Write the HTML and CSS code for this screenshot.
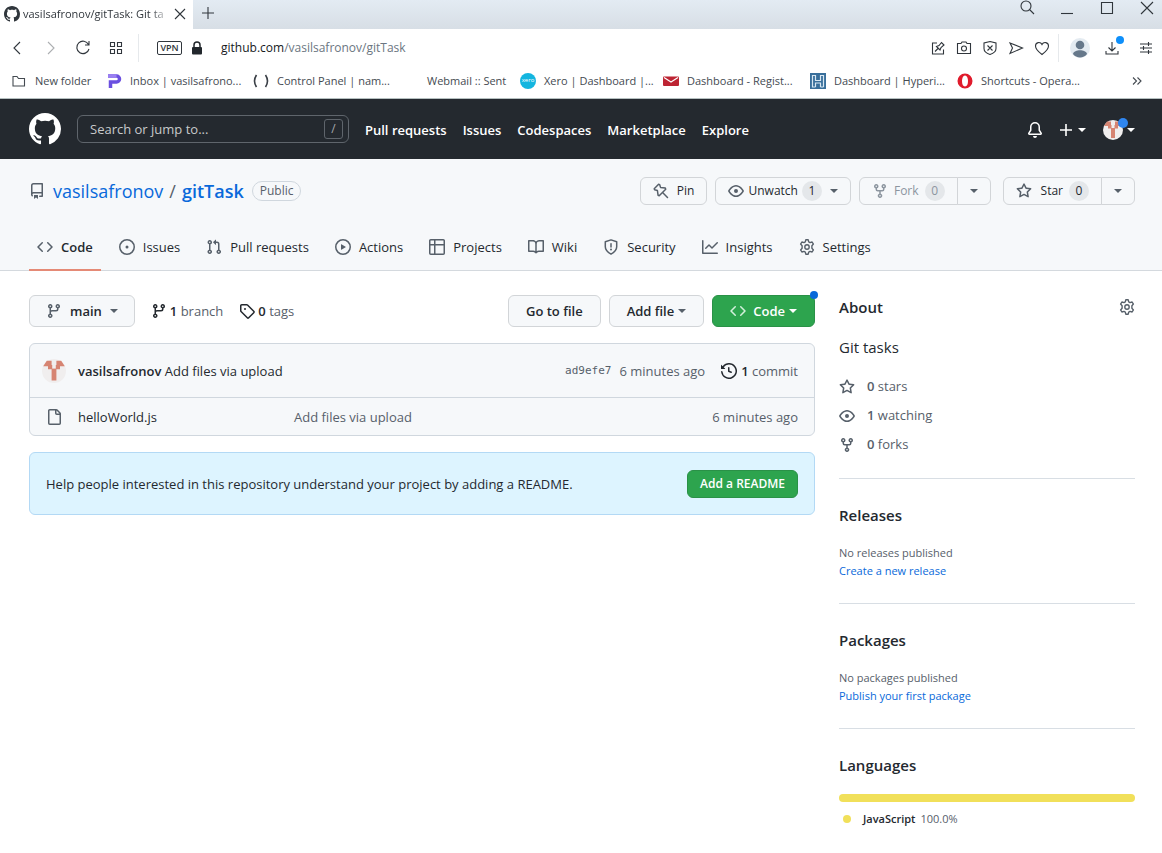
FILE: index.html
```html
<!DOCTYPE html>
<html lang="en">
<head>
<meta charset="utf-8">
<title>vasilsafronov/gitTask: Git tasks</title>
<link rel="stylesheet" href="styles.css">
</head>
<body>
<svg class="sprite" aria-hidden="true">
  <symbol id="mark" viewBox="0 0 16 16"><path d="M8 0C3.58 0 0 3.58 0 8c0 3.54 2.29 6.53 5.47 7.59.4.07.55-.17.55-.38 0-.19-.01-.82-.01-1.49-2.01.37-2.53-.49-2.69-.94-.09-.23-.48-.94-.82-1.13-.28-.15-.68-.52-.01-.53.63-.01 1.08.58 1.23.82.72 1.21 1.87.87 2.33.66.07-.52.28-.87.51-1.07-1.78-.2-3.64-.89-3.64-3.95 0-.87.31-1.59.82-2.15-.08-.2-.36-1.02.08-2.12 0 0 .67-.21 2.2.82.64-.18 1.32-.27 2-.27.68 0 1.36.09 2 .27 1.53-1.04 2.2-.82 2.2-.82.44 1.1.16 1.92.08 2.12.51.56.82 1.27.82 2.15 0 3.07-1.87 3.75-3.65 3.95.29.25.54.73.54 1.48 0 1.07-.01 1.93-.01 2.2 0 .21.15.46.55.38A8.013 8.013 0 0016 8c0-4.42-3.58-8-8-8z"/></symbol>
  <symbol id="repo" viewBox="0 0 16 16"><path fill-rule="evenodd" d="M2 2.5A2.5 2.5 0 014.5 0h8.75a.75.75 0 01.75.75v12.5a.75.75 0 01-.75.75h-2.5a.75.75 0 110-1.5h1.75v-2h-8a1 1 0 00-.714 1.7.75.75 0 01-1.072 1.05A2.495 2.495 0 012 11.5v-9zm10.5-1V9h-8c-.356 0-.694.074-1 .208V2.5a1 1 0 011-1h8zM5 12.25v3.25a.25.25 0 00.4.2l1.45-1.087a.25.25 0 01.3 0L8.6 15.7a.25.25 0 00.4-.2v-3.25a.25.25 0 00-.25-.25h-3.5a.25.25 0 00-.25.25z"/></symbol>
  <symbol id="code" viewBox="0 0 16 16"><path fill-rule="evenodd" d="M4.72 3.22a.75.75 0 011.06 1.06L2.06 8l3.72 3.72a.75.75 0 11-1.06 1.06L.47 8.53a.75.75 0 010-1.06l4.25-4.25zm6.56 0a.75.75 0 10-1.06 1.06L13.94 8l-3.72 3.72a.75.75 0 101.06 1.06l4.25-4.25a.75.75 0 000-1.06l-4.25-4.25z"/></symbol>
  <symbol id="issue" viewBox="0 0 16 16"><path d="M8 9.5a1.5 1.5 0 100-3 1.5 1.5 0 000 3z"/><path fill-rule="evenodd" d="M8 0a8 8 0 100 16A8 8 0 008 0zM1.5 8a6.5 6.5 0 1113 0 6.5 6.5 0 01-13 0z"/></symbol>
  <symbol id="pull" viewBox="0 0 16 16"><path fill-rule="evenodd" d="M7.177 3.073L9.573.677A.25.25 0 0110 .854v4.792a.25.25 0 01-.427.177L7.177 3.427a.25.25 0 010-.354zM3.75 2.5a.75.75 0 100 1.5.75.75 0 000-1.5zm-2.25.75a2.25 2.25 0 113 2.122v5.256a2.251 2.251 0 11-1.5 0V5.372A2.25 2.25 0 011.5 3.25zM11 2.5h-1V4h1a1 1 0 011 1v5.628a2.251 2.251 0 101.5 0V5A2.5 2.5 0 0011 2.5zm1 10.25a.75.75 0 111.5 0 .75.75 0 01-1.5 0zM3.75 12a.75.75 0 100 1.5.75.75 0 000-1.5z"/></symbol>
  <symbol id="play" viewBox="0 0 16 16"><path fill-rule="evenodd" d="M1.5 8a6.5 6.5 0 1113 0 6.5 6.5 0 01-13 0zM8 0a8 8 0 100 16A8 8 0 008 0zM6.379 5.227A.25.25 0 006 5.442v5.117a.25.25 0 00.379.214l4.264-2.559a.25.25 0 000-.428L6.379 5.227z"/></symbol>
  <symbol id="table" viewBox="0 0 16 16"><path fill-rule="evenodd" d="M0 1.75C0 .784.784 0 1.75 0h12.5C15.216 0 16 .784 16 1.75v12.5A1.75 1.75 0 0114.25 16H1.75A1.75 1.75 0 010 14.25V1.75zM1.5 6.5v7.75c0 .138.112.25.25.25H5v-8H1.5zM5 5H1.5V1.75a.25.25 0 01.25-.25H5V5zm1.5 1.5v8h7.75a.25.25 0 00.25-.25V6.5h-8zm8-1.5h-8V1.5h7.75a.25.25 0 01.25.25V5z"/></symbol>
  <symbol id="book" viewBox="0 0 16 16"><path fill-rule="evenodd" d="M0 1.75A.75.75 0 01.75 1h4.253c1.227 0 2.317.59 3 1.501A3.744 3.744 0 0111.006 1h4.245a.75.75 0 01.75.75v10.5a.75.75 0 01-.75.75h-4.507a2.25 2.25 0 00-1.591.659l-.622.621a.75.75 0 01-1.06 0l-.622-.621A2.25 2.25 0 005.258 13H.75a.75.75 0 01-.75-.75V1.75zm8.755 3a2.25 2.25 0 012.25-2.25H14.5v9h-3.757c-.71 0-1.4.201-1.992.572l.004-7.322zm-1.504 7.324l.004-5.073-.002-2.253A2.25 2.25 0 005.003 2.5H1.5v9h3.757a3.75 3.75 0 011.994.574z"/></symbol>
  <symbol id="shield" viewBox="0 0 16 16"><path fill="none" stroke="currentColor" stroke-width="1.5" stroke-linejoin="round" d="M8 .9l5.7 1.9v5c0 3.4-2.6 5.6-5.7 7.3-3.1-1.7-5.7-3.9-5.7-7.3v-5z"/><path fill="none" stroke="currentColor" stroke-width="1.5" stroke-linecap="round" d="M8 4.7v3.3"/><circle cx="8" cy="10.5" r="1"/></symbol>
  <symbol id="graph" viewBox="0 0 16 16"><path fill-rule="evenodd" d="M1.5 1.75a.75.75 0 00-1.5 0v12.5c0 .414.336.75.75.75h14.5a.75.75 0 000-1.5H1.5V1.75zm14.28 2.53a.75.75 0 00-1.06-1.06L10 7.94 7.53 5.47a.75.75 0 00-1.06 0L3.22 8.72a.75.75 0 001.06 1.06L7 7.06l2.47 2.47a.75.75 0 001.06 0l5.25-5.25z"/></symbol>
  <symbol id="gear" viewBox="0 0 16 16"><path fill="none" stroke="currentColor" stroke-width="1.4" stroke-linejoin="round" d="M6.8.8h2.4l.5 2.1 1.3.7 2.1-.6 1.3 2.1-1.5 1.6v2.600l1.500 1.600-1.300 2.100-2.100-.6-1.300.7-.5 2.100H6.800l-.5-2.100-1.300-.7-2.100.6-1.300-2.100 1.500-1.600V6.700L1.600 5.100 2.900 3l2.100.6 1.300-.7z"/><circle cx="8" cy="8" r="2.200" fill="none" stroke="currentColor" stroke-width="1.4"/></symbol>
  <symbol id="branch" viewBox="0 0 16 16"><path fill-rule="evenodd" d="M11.75 2.5a.75.75 0 100 1.5.75.75 0 000-1.5zm-2.25.75a2.25 2.25 0 113 2.122V6A2.5 2.5 0 0110 8.5H6a1 1 0 00-1 1v1.128a2.251 2.251 0 11-1.5 0V5.372a2.25 2.25 0 111.5 0v1.836A2.492 2.492 0 016 7h4a1 1 0 001-1v-.628A2.25 2.25 0 019.5 3.25zM4.25 12a.75.75 0 100 1.5.75.75 0 000-1.5zM3.5 3.25a.75.75 0 111.5 0 .75.75 0 01-1.5 0z"/></symbol>
  <symbol id="fork" viewBox="0 0 16 16"><path fill-rule="evenodd" d="M5 3.25a.75.75 0 11-1.5 0 .75.75 0 011.5 0zm0 2.122a2.25 2.25 0 10-1.5 0v.878A2.25 2.25 0 005.75 8.5h1.5v2.128a2.251 2.251 0 101.5 0V8.5h1.5a2.25 2.25 0 002.25-2.25v-.878a2.25 2.25 0 10-1.5 0v.878a.75.75 0 01-.75.75h-4.5A.75.75 0 015 6.25v-.878zm3.75 7.378a.75.75 0 11-1.5 0 .75.75 0 011.5 0zm3-8.75a.75.75 0 100-1.5.75.75 0 000 1.5z"/></symbol>
  <symbol id="tag" viewBox="0 0 16 16"><path fill-rule="evenodd" d="M2.5 7.775V2.75a.25.25 0 01.25-.25h5.025a.25.25 0 01.177.073l6.25 6.25a.25.25 0 010 .354l-5.025 5.025a.25.25 0 01-.354 0l-6.25-6.25a.25.25 0 01-.073-.177zm-1.5 0V2.75C1 1.784 1.784 1 2.75 1h5.025c.464 0 .91.184 1.238.513l6.25 6.25a1.75 1.75 0 010 2.474l-5.026 5.026a1.75 1.75 0 01-2.474 0l-6.25-6.25A1.75 1.75 0 011 7.775zM6 5a1 1 0 100 2 1 1 0 000-2z"/></symbol>
  <symbol id="file" viewBox="0 0 16 16"><path fill-rule="evenodd" d="M3.75 1.5a.25.25 0 00-.25.25v12.5c0 .138.112.25.25.25h9.5a.25.25 0 00.25-.25V6H10.75A1.75 1.75 0 019 4.25V1.5H3.75zm6.75.062V4.25c0 .138.112.25.25.25h2.688L10.5 1.562zM2 1.75C2 .784 2.784 0 3.75 0h6.586c.464 0 .909.184 1.237.513l2.914 2.914c.329.328.513.773.513 1.237v9.586A1.75 1.75 0 0113.25 16h-9.5A1.75 1.75 0 012 14.25V1.75z"/></symbol>
  <symbol id="history" viewBox="0 0 16 16"><path fill-rule="evenodd" d="M1.643 3.143L.427 1.927A.25.25 0 000 2.104V5.75c0 .138.112.25.25.25h3.646a.25.25 0 00.177-.427L2.715 4.215a6.5 6.5 0 11-1.18 4.458.75.75 0 10-1.493.154 8.001 8.001 0 101.6-5.684zM7.75 4a.75.75 0 01.75.75v2.992l2.028.812a.75.75 0 01-.557 1.392l-2.5-1A.75.75 0 017 8.25v-3.5A.75.75 0 017.75 4z"/></symbol>
  <symbol id="star" viewBox="0 0 16 16"><path fill-rule="evenodd" d="M8 .25a.75.75 0 01.673.418l1.882 3.815 4.21.612a.75.75 0 01.416 1.279l-3.046 2.97.719 4.192a.75.75 0 01-1.088.791L8 12.347l-3.766 1.98a.75.75 0 01-1.088-.79l.72-4.194L.818 6.374a.75.75 0 01.416-1.28l4.21-.611L7.327.668A.75.75 0 018 .25zm0 2.445L6.615 5.5a.75.75 0 01-.564.41l-3.097.45 2.24 2.184a.75.75 0 01.216.664l-.528 3.084 2.769-1.456a.75.75 0 01.698 0l2.77 1.456-.53-3.084a.75.75 0 01.216-.664l2.24-2.183-3.096-.45a.75.75 0 01-.564-.41L8 2.694z"/></symbol>
  <symbol id="eye" viewBox="0 0 16 16"><path fill-rule="evenodd" d="M1.679 7.932c.412-.621 1.242-1.75 2.366-2.717C5.175 4.242 6.527 3.5 8 3.5c1.473 0 2.824.742 3.955 1.715 1.124.967 1.954 2.096 2.366 2.717a.119.119 0 010 .136c-.412.621-1.242 1.75-2.366 2.717C10.825 11.758 9.473 12.5 8 12.5c-1.473 0-2.824-.742-3.955-1.715C2.92 9.818 2.09 8.69 1.679 8.068a.119.119 0 010-.136zM8 2c-1.981 0-3.67.992-4.933 2.078C1.797 5.169.88 6.423.43 7.1a1.619 1.619 0 000 1.798c.45.678 1.367 1.932 2.637 3.024C4.329 13.008 6.019 14 8 14c1.981 0 3.67-.992 4.933-2.078 1.27-1.091 2.187-2.345 2.637-3.023a1.619 1.619 0 000-1.798c-.45-.678-1.367-1.932-2.637-3.023C11.671 2.992 9.981 2 8 2zm0 8a2 2 0 100-4 2 2 0 000 4z"/></symbol>
  <symbol id="pin" viewBox="0 0 16 16"><path fill="none" stroke="currentColor" stroke-width="1.500" stroke-linecap="round" stroke-linejoin="round" d="M5.600 1.300L1.200 5.700l.4 1 2.800.8.700 4.800 1.100.4 6.500-6.500-.4-1.100-4.800-.7-.8-2.800zM9.800 9.800l4.700 4.700"/></symbol>
  <symbol id="bell" viewBox="0 0 16 16"><path d="M8 16a2 2 0 001.985-1.75c.017-.137-.097-.25-.235-.25h-3.5c-.138 0-.252.113-.235.25A2 2 0 008 16z"/><path fill-rule="evenodd" d="M8 1.5A3.5 3.5 0 004.5 5v2.947c0 .346-.102.683-.294.97l-1.703 2.556a.018.018 0 00-.003.01c0 .01.008.017.017.017h10.966c.01 0 .017-.007.017-.017a.018.018 0 00-.003-.01l-1.703-2.556a1.75 1.75 0 01-.294-.97V5A3.5 3.5 0 008 1.5zM3 5a5 5 0 0110 0v2.947c0 .05.015.098.042.139l1.703 2.555A1.518 1.518 0 0113.482 13H2.518a1.518 1.518 0 01-1.263-2.36l1.703-2.554A.25.25 0 003 7.947V5z"/></symbol>
  <symbol id="ident" viewBox="0 0 20 20"><circle cx="10" cy="10" r="10" fill="#f0eeee"/><path fill="#d68472" d="M4 1.500h4v3.500h4V1.500h4l3 4.500h-4v2.500h-3V18H8V8.500H5V6H1z"/><path fill="#f0eeee" d="M8.500 1h3v7h-3z"/></symbol>
</svg>

<header class="browser">
  <div class="tabstrip">
    <div class="tab">
      <svg class="tab-icon"><use href="#mark"/></svg>
      <span class="tab-title">vasilsafronov/gitTask: Git ta</span>
      <button class="plain" aria-label="Close tab"><svg class="line s12" viewBox="0 0 12 12"><path d="M1 1l10 10M11 1L1 11"/></svg></button>
    </div>
    <button class="plain new-tab" aria-label="New tab"><svg class="line s12" viewBox="0 0 12 12"><path d="M6 0v12M0 6h12"/></svg></button>
    <div class="window-controls">
      <button class="plain" aria-label="Search tabs"><svg class="line s16" viewBox="0 0 16 16"><circle cx="7" cy="6" r="5"/><path d="M10.5 9.5L15 14"/></svg></button>
      <button class="plain" aria-label="Minimize"><svg class="line s14" viewBox="0 0 14 14"><path d="M1 12.5h12"/></svg></button>
      <button class="plain" aria-label="Maximize"><svg class="line s14" viewBox="0 0 14 14"><path d="M1.5 1.5h11v11h-11z"/></svg></button>
      <button class="plain" aria-label="Close"><svg class="line s14" viewBox="0 0 14 14"><path d="M1 1l12 12M13 1L1 13"/></svg></button>
    </div>
  </div>
  <div class="toolbar">
    <div class="nav-buttons">
      <button class="plain" aria-label="Back"><svg class="line s16" viewBox="0 0 16 16"><path d="M11 2L5 8l6 6"/></svg></button>
      <button class="plain faded" aria-label="Forward"><svg class="line s16" viewBox="0 0 16 16"><path d="M6 2l6 6-6 6"/></svg></button>
      <button class="plain" aria-label="Reload"><svg class="line s16" viewBox="0 0 16 16"><path d="M13.5 4.5A6.2 6.200 0 1014 9M14 1v4h-4"/></svg></button>
      <button class="plain" aria-label="Speed dial"><svg class="line s16" viewBox="0 0 16 16"><path d="M2.500 2.500h4v4h-4zM9.500 2.500h4v4h-4zM2.500 9.500h4v4h-4zM9.500 9.500h4v4h-4z"/></svg></button>
    </div>
    <span class="divider"></span>
    <span class="vpn">VPN</span>
    <svg class="lock" viewBox="0 0 12 14"><rect x="1" y="6" width="10" height="7.5" rx="1" fill="#22272c"/><path d="M3 7V4a3 3 0 016 0v3" fill="none" stroke="#22272c" stroke-width="1.5"/></svg>
    <div class="address">github.com<span>/vasilsafronov/gitTask</span></div>
    <div class="actions">
      <button class="plain" aria-label="Edit page"><svg class="line s16" viewBox="0 0 16 16"><path d="M7 3H2.5v11h11V9.5M5 11.5l3-3M6.5 6.5l3.5 3.5 1-2.500L14 5 11.500 2.500 9 5.500z"/></svg></button>
      <button class="plain" aria-label="Snapshot"><svg class="line s16" viewBox="0 0 16 16"><path d="M1.5 3.5h3.5l1-1.500h4l1 1.500h3.500v10h-13z"/><circle cx="8" cy="8.500" r="2.500"/></svg></button>
      <button class="plain" aria-label="Ad blocker"><svg class="line s16" viewBox="0 0 16 16"><path d="M8 1.5l6 1.500v5.500c0 3-3 5-6 6-3-1-6-3-6-6V3zM5.500 5.500l5 5M10.500 5.500l-5 5"/></svg></button>
      <button class="plain" aria-label="My Flow"><svg class="line s16" viewBox="0 0 16 16"><path d="M2 3l12.5 5L2 13.500 4.500 8z"/></svg></button>
      <button class="plain" aria-label="Add bookmark"><svg class="line s16" viewBox="0 0 16 16"><path d="M8 14.5C4 11.500 1.500 9 1.500 6c0-4 5-4.500 6.500-1.500C9.500 1.500 14.500 2 14.500 6c0 3-2.500 5.500-6.500 8.500z"/></svg></button>
      <span class="divider"></span>
      <button class="plain profile" aria-label="Profile"><svg class="s20" viewBox="0 0 20 20"><circle cx="10" cy="10" r="10" fill="#e4ebf1"/><circle cx="10" cy="7" r="4.3" fill="#66788a"/><path d="M3 16c1-5 13-5 14 0-3 4.500-11 4.500-14 0z" fill="#66788a"/></svg></button>
      <button class="plain download" aria-label="Downloads"><svg class="line s16" viewBox="0 0 16 16"><path d="M8 2v9M4.500 7.500L8 11l3.500-3.500M2 11v3h12v-3"/></svg><i class="sky-dot"></i></button>
      <button class="plain" aria-label="Easy setup"><svg class="line s16" viewBox="0 0 16 16"><path d="M2 4h12M2 8h12M2 12h12M10.500 2v4M5.500 6v4M10.500 10v4"/></svg></button>
    </div>
  </div>
  <nav class="bookmarks" aria-label="Bookmarks">
    <a href="#"><svg class="line s16" viewBox="0 0 16 16"><path d="M2 3.500h4l1.500 2h6v7.500H2z"/></svg>New folder</a>
    <a href="#"><svg class="s16" viewBox="0 0 16 16"><path d="M2 3h8.500a3 3 0 010 6H4.500v6" fill="none" stroke="#6b4fe0" stroke-width="3.500"/><path d="M2 3h8.500" fill="none" stroke="#9a80f2" stroke-width="3.500"/></svg>Inbox | vasilsafrono...</a>
    <a href="#"><svg class="s16" viewBox="0 0 16 16"><path d="M3.500 2Q-.5 8 3.500 14M12.500 2q4 6 0 12" fill="none" stroke="#3a3f46" stroke-width="1.600"/></svg>Control Panel | nam...</a>
    <a href="#"><span class="s16"></span>Webmail :: Sent</a>
    <a href="#"><span class="xero">xero</span>Xero | Dashboard |...</a>
    <a href="#"><svg class="s16" viewBox="0 0 16 16"><rect y="3.500" width="16" height="9.500" rx="1" fill="#bd2433"/><path d="M1 4.500l7 4.500 7-4.500" fill="none" stroke="#fff" stroke-width="1.200"/></svg>Dashboard - Regist...</a>
    <a href="#"><svg class="s16" viewBox="0 0 16 16"><path fill="#396f9b" d="M0 0h16v16H0z"/><path d="M2.500 14V2.500h3v5h5v-5h3V14M5.500 14v-4h5v4M2.500 2.500V14h3M13.500 14h-3" fill="none" stroke="#d8e7f2" stroke-width="1.200"/></svg>Dashboard | Hyperi...</a>
    <a href="#"><svg class="s16" viewBox="0 0 16 16"><path fill="#e01b2c" fill-rule="evenodd" d="M8 .5a7.500 7.500 0 100 15 7.500 7.500 0 000-15zM8 2.500c2 0 3 2.500 3 5.500s-1 5.500-3 5.500S5 11 5 8s1-5.500 3-5.500z"/></svg>Shortcuts - Opera...</a>
    <button class="plain" aria-label="More bookmarks"><svg class="line s12" viewBox="0 0 12 12"><path d="M2 2.500L5.500 6 2 9.500M6.500 2.500L10 6 6.500 9.500"/></svg></button>
  </nav>
</header>

<header class="site">
  <a href="#" aria-label="Homepage"><svg class="logo"><use href="#mark"/></svg></a>
  <form class="search">
    <input type="text" aria-label="Search or jump to" placeholder="Search or jump to...">
    <kbd>/</kbd>
  </form>
  <nav class="site-nav" aria-label="Global">
    <a href="#">Pull requests</a><a href="#">Issues</a><a href="#">Codespaces</a><a href="#">Marketplace</a><a href="#">Explore</a>
  </nav>
  <div class="site-user">
    <button class="plain" aria-label="Notifications"><svg class="s16"><use href="#bell"/></svg></button>
    <button class="plain create" aria-label="Create new"><svg class="plus" viewBox="0 0 12 12"><path d="M6 0v12M0 6h12"/></svg><i class="caret"></i></button>
    <button class="plain user" aria-label="Account"><svg class="s20"><use href="#ident"/></svg><i class="blue-dot"></i><i class="caret"></i></button>
  </div>
</header>

<div class="repo-head">
  <div class="title-row">
    <svg class="s16 muted"><use href="#repo"/></svg>
    <h1><a href="#">vasilsafronov</a><span>/</span><a href="#"><strong>gitTask</strong></a></h1>
    <span class="badge">Public</span>
    <div class="repo-actions">
      <button class="btn small"><svg class="s16"><use href="#pin"/></svg>Pin</button>
      <button class="btn small watch"><svg class="s16"><use href="#eye"/></svg>Unwatch<span class="count">1</span><i class="caret"></i></button>
      <div class="group"><button class="btn small" disabled><svg class="s16"><use href="#fork"/></svg>Fork<span class="count">0</span></button><button class="btn small more" aria-label="Fork options"><i class="caret"></i></button></div>
      <div class="group star"><button class="btn small"><svg class="s16"><use href="#star"/></svg>Star<span class="count">0</span></button><button class="btn small more" aria-label="Star lists"><i class="caret"></i></button></div>
    </div>
  </div>
  <nav class="repo-nav" aria-label="Repository">
    <a class="current" href="#"><svg class="s16"><use href="#code"/></svg>Code</a>
    <a href="#"><svg class="s16"><use href="#issue"/></svg>Issues</a>
    <a href="#"><svg class="s16"><use href="#pull"/></svg>Pull requests</a>
    <a href="#"><svg class="s16"><use href="#play"/></svg>Actions</a>
    <a href="#"><svg class="s16"><use href="#table"/></svg>Projects</a>
    <a href="#"><svg class="s16"><use href="#book"/></svg>Wiki</a>
    <a href="#"><svg class="s16"><use href="#shield"/></svg>Security</a>
    <a href="#"><svg class="s16"><use href="#graph"/></svg>Insights</a>
    <a href="#"><svg class="s16"><use href="#gear"/></svg>Settings</a>
  </nav>
</div>

<div class="layout">
  <main>
    <div class="file-bar">
      <button class="btn branch"><svg class="s16"><use href="#branch"/></svg>main<i class="caret"></i></button>
      <a class="stat" href="#"><svg class="s16"><use href="#branch"/></svg><span><b>1</b> branch</span></a>
      <a class="stat" href="#"><svg class="s16"><use href="#tag"/></svg><span><b>0</b> tags</span></a>
      <div class="file-actions">
        <button class="btn">Go to file</button>
        <button class="btn">Add file<i class="caret"></i></button>
        <button class="btn green"><svg class="s16"><use href="#code"/></svg>Code<i class="caret"></i><i class="blue-dot"></i></button>
      </div>
    </div>
    <div class="files">
      <div class="commit">
        <svg class="avatar"><use href="#ident"/></svg>
        <span class="message"><b>vasilsafronov</b> Add files via upload</span>
        <a class="hash" href="#">ad9efe7</a>
        <span class="when">6 minutes ago</span>
        <a class="commits" href="#"><svg class="s16"><use href="#history"/></svg><span><b>1</b> commit</span></a>
      </div>
      <table>
        <tr><td class="c-icon"><svg class="s16 muted"><use href="#file"/></svg></td><td class="c-name"><a href="#">helloWorld.js</a></td><td class="c-msg">Add files via upload</td><td class="c-age">6 minutes ago</td></tr>
      </table>
    </div>
    <div class="readme">
      <span>Help people interested in this repository understand your project by adding a README.</span>
      <button class="btn small green">Add a README</button>
    </div>
  </main>
  <aside>
    <section>
      <div class="about"><h2>About</h2><button class="plain muted" aria-label="Edit repository details"><svg class="s16"><use href="#gear"/></svg></button></div>
      <p class="description">Git tasks</p>
      <ul>
        <li><svg class="s16"><use href="#star"/></svg><span><b>0</b> stars</span></li>
        <li><svg class="s16"><use href="#eye"/></svg><span><b>1</b> watching</span></li>
        <li><svg class="s16"><use href="#fork"/></svg><span><b>0</b> forks</span></li>
      </ul>
    </section>
    <section><h2>Releases</h2><p class="note">No releases published</p><p class="note"><a href="#">Create a new release</a></p></section>
    <section><h2>Packages</h2><p class="note">No packages published</p><p class="note"><a href="#">Publish your first package</a></p></section>
    <section><h2>Languages</h2><div class="bar"></div><p class="language"><i></i><b>JavaScript</b> <span>100.0%</span></p></section>
  </aside>
</div>
</body>
</html>
```
FILE: styles.css
```css
* { box-sizing: border-box; }
body { margin: 0; background: #fff; color: #24292f; font: 13px/20px "Open Sans", "Noto Sans", sans-serif; }
a { color: inherit; text-decoration: none; }
h1, h2, p, ul { margin: 0; padding: 0; font-weight: 400; }
b, strong { font-weight: 600; }
button, input { font: inherit; color: inherit; }
svg { display: block; flex: none; fill: currentColor; }
.sprite { position: absolute; width: 0; height: 0; }
.s12 { width: 12px; height: 12px; }
.s14 { width: 14px; height: 14px; }
.s16 { width: 16px; height: 16px; flex: none; }
.s20 { width: 20px; height: 20px; }
.line { fill: none; stroke: currentColor; stroke-width: 1.1; }
.muted { color: #57606a; }
.plain { display: flex; align-items: center; justify-content: center; padding: 0; border: 0; background: none; }
.caret { width: 0; height: 0; border: 4px solid transparent; border-top-color: currentColor; border-bottom: 0; }

/* Browser frame */
.browser { color: #30363c; border-bottom: 1px solid #b5c0c0; font-size: 11px; }
.tabstrip { display: flex; height: 29px; background: linear-gradient(#e3ebf3, #d7dee5); }
.tab { display: flex; align-items: center; width: 193px; padding: 0 7px 2px 4px; gap: 3px; background: #fff; }
.tab-icon { width: 16px; height: 16px; }
.tab-title { flex: 1; white-space: nowrap; mask-image: linear-gradient(90deg, #000 86%, transparent); }
.new-tab { width: 30px; height: 25px; }
.window-controls { display: flex; gap: 10px; height: 16px; margin-left: auto; }
.window-controls .plain { width: 30px; }
.toolbar { display: flex; align-items: center; height: 38px; padding: 0 4px 0 5px; }
.nav-buttons { display: flex; gap: 9px; }
.toolbar .plain { width: 24px; height: 24px; }
.faded { opacity: 0.4; }
.divider { width: 1px; height: 28px; background: #e6e9ec; }
.nav-buttons + .divider { margin: 0 18px 0 10px; }
.vpn { width: 25px; height: 14px; border: 1px solid #30363c; border-radius: 2px; font-size: 9px; line-height: 12px; font-weight: 600; text-align: center; }
.lock { width: 12px; height: 14px; margin: 0 18px 0 9px; }
.address { flex: 1; font-size: 12px; color: #15191d; }
.address span { color: #6b7681; }
.actions { display: flex; align-items: center; gap: 2px; }
.actions .divider { margin: 0 9px 0 2px; }
.actions .profile { width: 20px; }
.actions .download { position: relative; margin: 0 8px; }
.sky-dot { position: absolute; top: 0; right: 0; width: 8px; height: 8px; border-radius: 50%; background: #0e8ffa; }
.bookmarks { display: grid; grid-template-columns: 95px 147px 150px 117px 143px 147px 147px 1fr 50px; align-items: center; height: 31px; padding: 0 0 3px 11px; white-space: nowrap; color: #444a51; }
.bookmarks a { display: flex; align-items: center; gap: 8px; }
.xero { width: 16px; height: 16px; border-radius: 50%; background: #13b5df; color: #fff; font-size: 6px; line-height: 15px; text-align: center; }

/* Site header */
.site { display: flex; align-items: center; height: 60px; padding: 0 27px 0 29px; background: #24292f; color: #fff; }
.logo { width: 32px; height: 32px; }
.search { display: flex; align-items: center; width: 272px; height: 28px; margin: 0 16px; padding-right: 5px; border: 1px solid #5f656c; border-radius: 6px; }
.search input { flex: 1; min-width: 0; padding: 0 12px; border: 0; outline: 0; background: none; }
.search input::placeholder { color: #c8cacc; opacity: 1; }
.search kbd { width: 19px; height: 20px; border: 1px solid #5f656c; border-radius: 3px; font: 12px/18px "Open Sans", sans-serif; text-align: center; color: #a5a9ad; }
.site-nav { display: flex; gap: 16px; padding-top: 2px; font-weight: 600; }
.site-user { display: flex; align-items: center; gap: 17px; margin-left: auto; padding-top: 2px; }
.create { gap: 6px; }
.plus { width: 12px; height: 12px; stroke: #fff; stroke-width: 1.6; }
.user { position: relative; gap: 4px; }
.blue-dot { position: absolute; top: -5px; right: -4px; width: 8px; height: 8px; border-radius: 50%; background: #0969da; }
.user .blue-dot { top: -2px; right: 7px; width: 10px; height: 10px; background: #2f86f0; }

/* Repository header */
.repo-head { padding: 16px 27px 0 29px; background: #f6f8fa; border-bottom: 1px solid #d4d9de; }
.title-row { display: flex; align-items: center; gap: 8px; height: 32px; }
h1 { display: flex; gap: 6px; font-size: 18px; line-height: 30px; color: #57606a; }
h1 a { color: #0969da; }
.badge { padding: 0 7px; border: 1px solid #d0d7de; border-radius: 10px; font-size: 12px; line-height: 18px; font-weight: 500; color: #57606a; }
.repo-actions { display: flex; gap: 8px; margin-left: auto; }
.btn { position: relative; display: flex; align-items: center; justify-content: center; gap: 8px; height: 32px; padding: 0 16px; border: 1px solid #d2d5d8; border-radius: 6px; background: #f6f8fa; font-weight: 600; white-space: nowrap; }
.btn svg, .btn .caret { color: #57606a; }
.btn.small { height: 28px; padding: 0 12px; font-size: 12px; }
.repo-actions .btn { font-weight: 500; }
.btn:disabled, .btn:disabled svg { color: #8c959f; }
.repo-actions .watch { gap: 4px; }
.watch .caret { margin-left: 4px; }
.count { width: 20px; border-radius: 10px; background: #e4e7ea; text-align: center; line-height: 20px; }
.group { display: flex; }
.group .btn:first-child { gap: 6px; border-radius: 6px 0 0 6px; }
.group .btn.more { width: 34px; margin-left: -1px; padding: 0; border-radius: 0 6px 6px 0; }
.group.star { margin-left: 4px; }
.group.star svg { margin-right: 3px; }
.repo-nav { display: flex; gap: 10px; height: 48px; margin: 16px 0 -1px; }
.repo-nav a { display: flex; align-items: center; gap: 8px; padding: 2px 8px 0; border-bottom: 2px solid transparent; }
.repo-nav svg { color: #57606a; }
.repo-nav .current { font-weight: 600; border-color: #e58a76; }

/* Content */
.layout { display: flex; gap: 24px; padding: 24px 27px 24px 29px; }
main { flex: 1; min-width: 0; }
.file-bar { display: flex; align-items: center; gap: 16px; }
.stat { display: flex; align-items: center; gap: 3px; }
.stat span, .when, .commits span { color: #57606a; }
.stat b, .commits b { color: #24292f; }
.file-actions { display: flex; gap: 8px; margin-left: auto; }
.file-actions .btn { gap: 4px; padding: 0 17px; }
.btn.green { background: #2da44e; border-color: #2a9147; color: #fff; }
.btn.green .caret { color: #fff; }
.btn.green svg { color: #d3f0db; margin-right: 3px; }
.files { margin: 16px 0; border: 1px solid #d0d7de; border-radius: 6px; background: #f6f8fa; }
.commit { display: flex; align-items: center; height: 54px; padding: 0 16px 0 12px; border-bottom: 1px solid #d0d7de; }
.avatar { width: 24px; height: 24px; margin-right: 12px; }
.message { flex: 1; }
.hash { font: 11px/20px "DejaVu Sans Mono", monospace; color: #57606a; }
.when { margin: 0 16px 0 8px; }
.commits { display: flex; align-items: center; gap: 4px; }
table { width: 100%; border-collapse: collapse; table-layout: fixed; }
td { height: 37px; padding: 0; }
td svg { margin-left: 16px; }
.c-icon { width: 48px; }
.c-name { width: 216px; }
.c-msg { color: #57606a; }
.c-age { width: 120px; padding-right: 16px; color: #57606a; text-align: right; }
.readme { display: flex; align-items: center; justify-content: space-between; height: 63px; padding: 0 16px; border: 1px solid #b3d9f5; border-radius: 6px; background: #ddf4ff; }
aside { width: 296px; flex: none; }
section + section { margin-top: 23px; padding-top: 24px; border-top: 1px solid #d8dee4; }
h2 { margin-bottom: 17px; font-size: 15px; line-height: 24px; font-weight: 600; }
.about { display: flex; align-items: center; justify-content: space-between; margin-bottom: 16px; }
.about h2 { margin: 0; }
.description { margin-bottom: 17px; font-size: 15px; line-height: 24px; }
ul { display: grid; gap: 8px; list-style: none; color: #57606a; }
li { display: flex; align-items: center; gap: 12px; line-height: 21px; }
.note { font-size: 11px; line-height: 18px; color: #57606a; }
.note a { color: #0969da; }
.bar { height: 8px; border-radius: 4px; background: #f1e05a; }
.language { display: flex; align-items: center; gap: 5px; margin-top: 7px; padding-left: 4px; font-size: 11px; color: #57606a; }
.language i { width: 8px; height: 8px; margin-right: 7px; border-radius: 50%; background: #f1e05a; }
.language b { color: #24292f; }
```
